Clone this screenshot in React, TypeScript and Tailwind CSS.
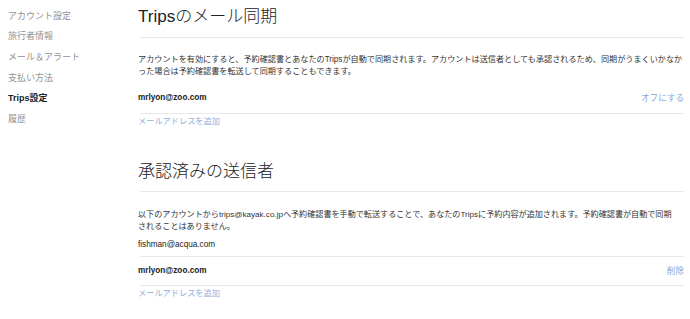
import React from "react";

const jp = { fontFamily: '"Liberation Sans", "Noto Sans CJK JP", sans-serif' };

function Sidebar() {
  const items = ["アカウント設定", "旅行者情報", "メール＆アラート", "支払い方法", "Trips設定", "履歴"];
  return (
    <div className="w-[138px] shrink-0 pl-[8px] pt-[6px] flex flex-col">
      {items.map((t) => (
        <div
          key={t}
          className={
            "h-[20.7px] flex items-center text-[9px] " +
            (t === "Trips設定" ? "text-[#222] font-bold" : "text-[#939393]")
          }
        >
          {t}
        </div>
      ))}
    </div>
  );
}

function Row({ email, action, bold, h }: { email: string; action?: string; bold?: boolean; h: string }) {
  return (
    <div className={"ml-[2px] border-b border-[#e8e8e8] flex items-center justify-between " + h}>
      <span className={"-ml-[2px] text-[8.2px] text-[#222] " + (bold ? "font-bold" : "")}>{email}</span>
      {action && <span className="text-[8.6px] text-[#86a8d8]">{action}</span>}
    </div>
  );
}

export default function App() {
  return (
    <div className="w-[690px] h-[319px] bg-white flex overflow-hidden" style={jp}>
      <Sidebar />
      <div className="flex-1 pr-[6px] flex flex-col">
        <div className="h-[38px] ml-[2px] border-b border-[#e8e8e8] flex items-start pt-[6px]">
          <h1 className="-ml-[2px] text-[17px] text-[#222] font-light leading-[22px]">Tripsのメール同期</h1>
        </div>
        <p className="mt-[16px] text-[8.15px] leading-[12px] text-[#333]">
          アカウントを有効にすると、予約確認書とあなたのTripsが自動で同期されます。アカウントは送信者としても承認されるため、同期がうまくいかなかった場合は予約確認書を転送して同期することもできます。
        </p>
        <div className="mt-[6px]">
          <Row email="mrlyon@zoo.com" action="オフにする" bold h="h-[30px]" />
        </div>
        <div className="text-[8.2px] text-[#8fb0dd] mt-[2px] leading-[12px]">メールアドレスを追加</div>

        <div className="mt-[33px] h-[31px] ml-[2px] border-b border-[#e8e8e8] flex items-start">
          <h2 className="-ml-[2px] text-[17px] text-[#222] font-light leading-[22px]">承認済みの送信者</h2>
        </div>
        <p className="mt-[17px] pr-[7px] text-[8.1px] leading-[12px] text-[#333]">
          以下のアカウントからtrips@kayak.co.jpへ予約確認書を手動で転送することで、あなたのTripsに予約内容が追加されます。予約確認書が自動で同期されることはありません。
        </p>
        <div className="mt-[2px]">
          <Row email="fishman@acqua.com" h="h-[22px]" />
        </div>
        <Row email="mrlyon@zoo.com" action="削除" bold h="h-[29px]" />
        <div className="text-[8.2px] text-[#8fb0dd] mt-[2px] leading-[12px]">メールアドレスを追加</div>
      </div>
    </div>
  );
}
